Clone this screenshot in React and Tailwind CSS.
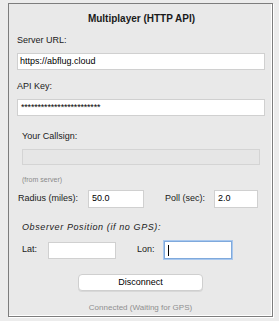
const inputCls = 'shrink-0 h-[17px] bg-white border border-[#d0d0d0] px-[3px] text-[9px] leading-[15px] text-black outline-none whitespace-nowrap';

const App = () => {
  return (
    <div className="w-[279px] h-[321px] bg-[#ececec] pt-[3px] pl-[8px] font-['Liberation_Sans',Arial,sans-serif] text-[#1a1a1a]">
      <div className="w-[265px] h-[314px] border border-[#7d7d7d] shadow-[inset_-1px_-1px_0_#fff,1px_1px_0_#fff] bg-[#e9e9e9] pl-[8px] pr-[6px]">
        <h1 className="mt-[8px] text-center text-[10px] leading-[14px] font-bold">Multiplayer (HTTP API)</h1>

        <div className="mt-[8px] text-[9px] leading-[12px]">Server URL:</div>
        <div className={`${inputCls} mt-[7px] w-[248px] pl-[2px]`}>https://abflug.cloud</div>

        <div className="mt-[10px] text-[9px] leading-[12px]">API Key:</div>
        <div className={`${inputCls} mt-[7px] w-[248px] tracking-[-0.2px]`}>************************</div>

        <div className="pl-[5px]">
          <div className="mt-[14px] text-[9px] leading-[12px]">Your Callsign:</div>
          <div className="mt-[7px] h-[16px] w-[238px] border border-[#d4d4d4] bg-[#e6e6e6]" />
          <div className="mt-[10px] text-[7px] leading-[9px] text-[#8a8a8a]">(from server)</div>
        </div>

        <div className="mt-[6px] flex items-center h-[18px] text-[9px] whitespace-nowrap">
          <span className="pl-[1px]">Radius (miles):</span>
          <div className={`${inputCls} h-[18px] ml-[10px] w-[56px]`}>50.0</div>
          <span className="ml-[21px]">Poll (sec):</span>
          <div className={`${inputCls} h-[18px] ml-[9px] w-[44px]`}>2.0</div>
        </div>

        <div className="pl-[5px]">
          <div className="mt-[13px] text-[9px] leading-[12px] italic tracking-[0.6px] whitespace-nowrap">Observer Position (if no GPS):</div>
          <div className="mt-[8px] flex items-center text-[9px] whitespace-nowrap">
            <span>Lat:</span>
            <div className={`${inputCls} ml-[11px] w-[68px]`} />
            <span className="ml-[21px]">Lon:</span>
            <div className="shrink-0 ml-[9px] w-[68px] h-[18px] bg-white border border-[#7fa9dc] shadow-[0_0_0_1px_#a9c8ee] flex items-center pl-[3px]">
              <div className="w-px h-[11px] bg-black" />
            </div>
          </div>
        </div>

        <div className="mt-[15px] flex justify-center pr-[2px]">
          <button className="w-[125px] h-[17px] bg-white border border-[#cfcfcf] rounded-[4px] text-[9px] leading-[15px] text-black shadow-[0_1px_0_#d8d8d8]">
            Disconnect
          </button>
        </div>

        <div className="mt-[12px] text-center text-[8px] leading-[10px] text-[#8f8f8f] pr-[2px]">Connected (Waiting for GPS)</div>
      </div>
    </div>
  );
};

export default App;
